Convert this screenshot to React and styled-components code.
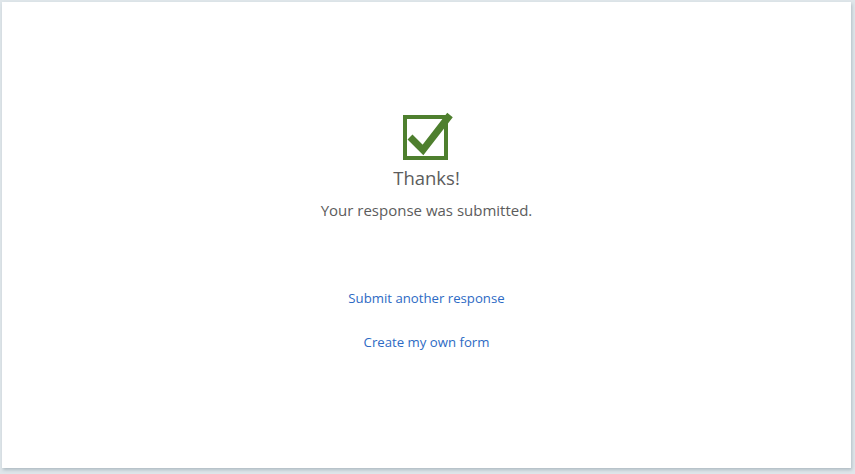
import React from "react";
import styled, { createGlobalStyle } from "styled-components";

const GlobalStyle = createGlobalStyle`
  html, body {
    margin: 0;
    padding: 0;
    background: #dfe6ea;
  }
  body {
    font-family: "Open Sans", "Noto Sans", sans-serif;
  }
`;

const Page = styled.div`
  width: 855px;
  height: 474px;
  padding: 2px 4px 6px 2px;
  box-sizing: border-box;
`;

const Card = styled.div`
  height: 100%;
  background: #ffffff;
  box-shadow: 1px 2px 3px rgba(120, 140, 150, 0.45);
  display: flex;
  flex-direction: column;
  align-items: center;
  padding-top: 108px;
  box-sizing: border-box;
`;

const Icon = styled.svg`
  width: 56px;
  height: 52px;
  display: block;
`;

const Title = styled.div`
  margin-top: 3px;
  font-size: 18.5px;
  color: #5c5c5c;
  line-height: 26px;
`;

const Desc = styled.div`
  margin-top: 9px;
  font-size: 15px;
  color: #5c5c5c;
  line-height: 20px;
`;

const Links = styled.div`
  margin-top: 68px;
  display: flex;
  flex-direction: column;
  align-items: center;
  gap: 24px;
`;

const Link = styled.a`
  font-size: 13.2px;
  line-height: 20px;
  color: #2d6ac4;
  text-decoration: none;
  cursor: pointer;
`;

const App = () => {
  return (
    <>
      <GlobalStyle />
      <Page>
        <Card>
          <Icon viewBox="0 0 56 52">
            <rect x="6" y="7" width="41" height="41" fill="none" stroke="#4e7f2e" strokeWidth="4" />
            <path d="M11 27 L24 40 L51 5" fill="none" stroke="#4e7f2e" strokeWidth="7" />
          </Icon>
          <Title>Thanks!</Title>
          <Desc>Your response was submitted.</Desc>
          <Links>
            <Link>Submit another response</Link>
            <Link>Create my own form</Link>
          </Links>
        </Card>
      </Page>
    </>
  );
};

export default App;
